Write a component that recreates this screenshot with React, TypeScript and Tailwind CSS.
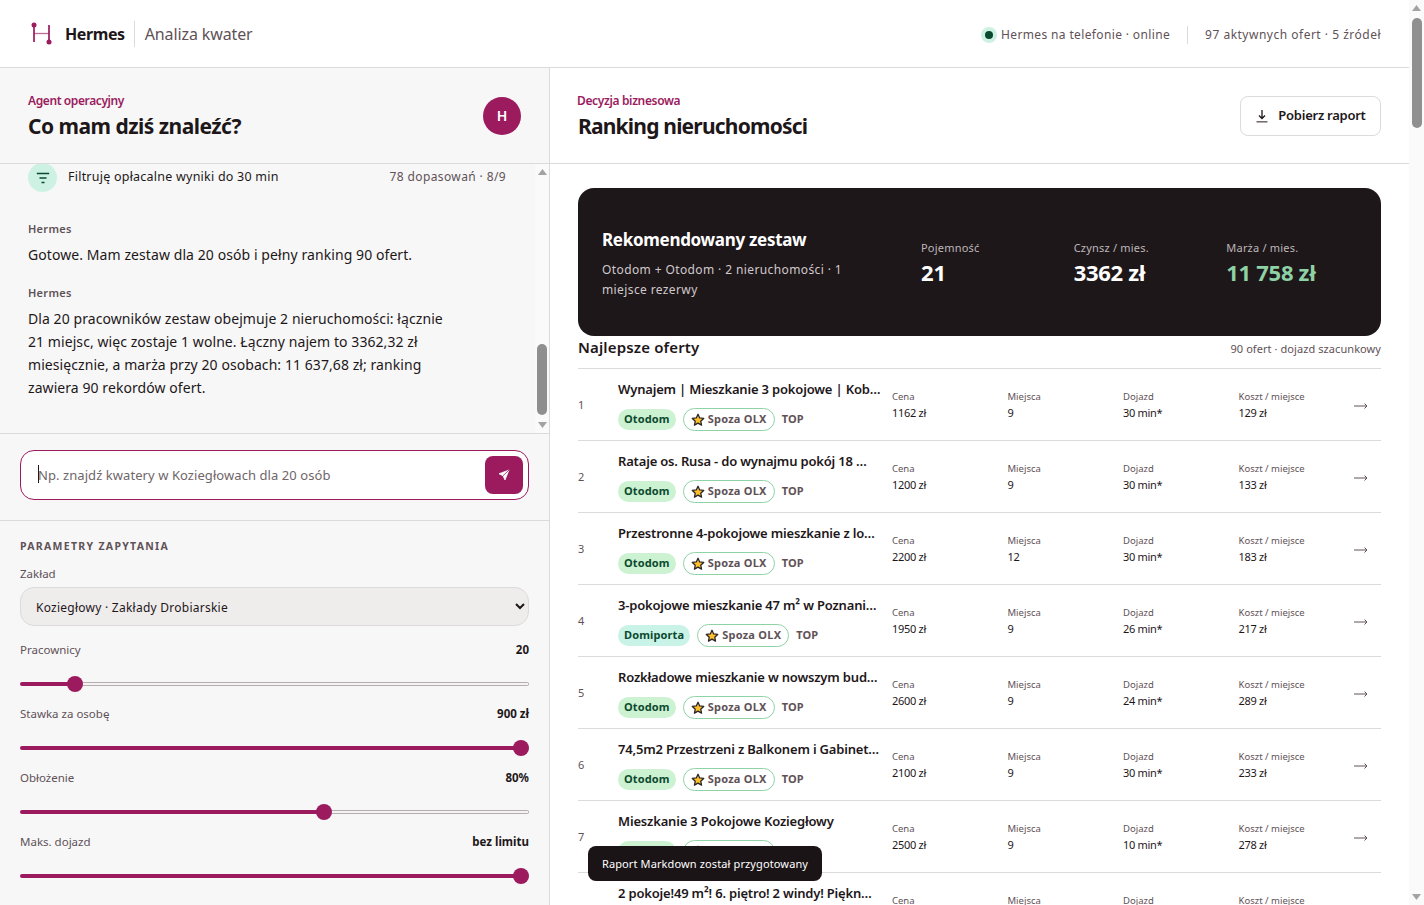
import React, { useLayoutEffect, useRef } from "react";

const rows = [
  { t: "Wynajem | Mieszkanie 3 pokojowe | Kob…", s: "Otodom", c: "1162 zł", m: "9", d: "30 min*", k: "129 zł" },
  { t: "Rataje os. Rusa - do wynajmu pokój 18 …", s: "Otodom", c: "1200 zł", m: "9", d: "30 min*", k: "133 zł" },
  { t: "Przestronne 4-pokojowe mieszkanie z lo…", s: "Otodom", c: "2200 zł", m: "12", d: "30 min*", k: "183 zł" },
  { t: "3-pokojowe mieszkanie 47 m² w Poznani…", s: "Domiporta", c: "1950 zł", m: "9", d: "26 min*", k: "217 zł" },
  { t: "Rozkładowe mieszkanie w nowszym bud…", s: "Otodom", c: "2600 zł", m: "9", d: "24 min*", k: "289 zł" },
  { t: "74,5m2 Przestrzeni z Balkonem i Gabinet…", s: "Otodom", c: "2100 zł", m: "9", d: "30 min*", k: "233 zł" },
  { t: "Mieszkanie 3 Pokojowe Koziegłowy", s: "Otodom", c: "2500 zł", m: "9", d: "10 min*", k: "278 zł" },
  { t: "2 pokoje!49 m²! 6. piętro! 2 windy! Piękn…", s: "Otodom", c: "2400 zł", m: "9", d: "30 min*", k: "267 zł" },
];

function Logo() {
  return (
    <svg width="22" height="26" viewBox="0 0 22 26" fill="none" className="shrink-0">
      <path d="M3 4V21M18 4V21" stroke="#9b1b5e" strokeWidth="1.7" />
      <path d="M3 12.5H18" stroke="#9b1b5e" strokeOpacity="0.65" strokeWidth="1.3" />
      <circle cx="3" cy="4" r="2.5" fill="#9b1b5e" />
      <circle cx="18" cy="21" r="2.5" fill="#9b1b5e" />
    </svg>
  );
}

function Star() {
  return (
    <svg width="14" height="14" viewBox="0 0 24 24" className="shrink-0">
      <path d="M12 2.2l2.9 6.3 6.9.8-5.1 4.7 1.4 6.8L12 17.3l-6.1 3.5 1.4-6.8L2.2 9.3l6.9-.8z" fill="#fbc02d" stroke="#2b2326" strokeWidth="2.2" strokeLinejoin="round" />
    </svg>
  );
}

function Bar({ before, thumb, className }: { before: number; thumb: number; className: string }) {
  return (
    <div className={`flex shrink-0 flex-col items-center bg-[#fafafa] ${className}`}>
      <svg width="9" height="6" viewBox="0 0 9 6" className="mt-[5px] shrink-0">
        <path d="M4.5 0L9 6H0z" fill="#a3a3a3" />
      </svg>
      <div className="w-[10px] shrink-0 rounded-full bg-[#8f8f8f]" style={{ marginTop: before, height: thumb }} />
      <svg width="9" height="6" viewBox="0 0 9 6" className="mt-auto mb-[5px] shrink-0">
        <path d="M4.5 6L9 0H0z" fill="#a3a3a3" />
      </svg>
    </div>
  );
}

function Metric({ label, value }: { label: string; value: string }) {
  return (
    <div className="flex flex-col pt-[2px]">
      <span className="text-[9.5px] leading-[14px] text-[#5f5257]">{label}</span>
      <span className="text-[11px] leading-[18px] tracking-[-0.3px] text-[#1e171a]">{value}</span>
    </div>
  );
}

function Row({ r, i }: { r: (typeof rows)[number]; i: number }) {
  return (
    <div className="grid h-[72px] grid-cols-[28px_262px_repeat(4,103.5px)_27px] items-center gap-x-3 border-b border-[#dcdadb]">
      <span className="pt-[2px] text-[11px] text-[#5f5257]">{i + 1}</span>
      <div className="flex min-w-0 flex-col gap-[10px] pt-[2px]">
        <div className="text-[13px] leading-[18px] font-semibold tracking-[-0.18px] whitespace-nowrap text-[#1e171a]">{r.t}</div>
        <div className="flex items-center gap-[7px] text-[11px] font-bold tracking-[0.12px]">
          <span className={`flex h-[21px] items-center rounded-full px-[6px] text-[#0b4a2e] ${r.s === "Domiporta" ? "bg-[#c9f3e7]" : "bg-[#ccf2d2]"}`}>{r.s}</span>
          <span className="flex h-[23px] items-center gap-[3px] rounded-full border border-[#8fd3a5] bg-white px-[7px] tracking-[0.25px] text-[#5f5257]">
            <Star />
            Spoza OLX
          </span>
          <span className="text-[#5f5257]">TOP</span>
        </div>
      </div>
      <Metric label="Cena" value={r.c} />
      <Metric label="Miejsca" value={r.m} />
      <Metric label="Dojazd" value={r.d} />
      <Metric label="Koszt / miejsce" value={r.k} />
      <svg width="14" height="8" viewBox="0 0 14 8" fill="none" stroke="#5f5257" strokeWidth="1" className="mt-[2px]">
        <path d="M0 4H13M10.5 1.5L13 4L10.5 6.5" />
      </svg>
    </div>
  );
}

function Slider({ label, value, min, max, cur }: { label: string; value: string; min: number; max: number; cur: number }) {
  const f = (cur - min) / (max - min);
  return (
    <div className="flex h-[64px] flex-col">
      <div className="flex h-[24px] shrink-0 items-center justify-between text-[11.5px]">
        <span className="text-[#5f5257]">{label}</span>
        <span className="font-bold text-[#1e171a]">{value}</span>
      </div>
      <input
        type="range"
        min={min}
        max={max}
        defaultValue={cur}
        style={{ "--p": `calc(8px + (100% - 16px) * ${f})` } as React.CSSProperties}
        className="mt-[14px] h-[16px] w-full shrink-0 appearance-none bg-transparent [&::-webkit-slider-runnable-track]:h-[4px] [&::-webkit-slider-runnable-track]:rounded-full [&::-webkit-slider-runnable-track]:[background:linear-gradient(to_right,transparent_var(--p),#f4f2f2_var(--p))_center/calc(100%-2px)_2px_no-repeat,linear-gradient(to_right,#9b1b5e_var(--p),#b5aeb1_var(--p))] [&::-webkit-slider-thumb]:mt-[-6px] [&::-webkit-slider-thumb]:h-[16px] [&::-webkit-slider-thumb]:w-[16px] [&::-webkit-slider-thumb]:appearance-none [&::-webkit-slider-thumb]:rounded-full [&::-webkit-slider-thumb]:bg-[#9b1b5e]"
      />
    </div>
  );
}

export default function App() {
  const chat = useRef<HTMLDivElement>(null);
  useLayoutEffect(() => {
    if (chat.current) chat.current.scrollTop = chat.current.scrollHeight;
  }, []);
  return (
    <div className="flex h-screen overflow-hidden bg-white text-[#1e171a] [font-family:'Noto_Sans',sans-serif]">
      <div className="flex min-w-0 flex-1 flex-col">
        <header className="flex h-[68px] shrink-0 items-center justify-between border-b border-[#dcdadb] bg-white pr-[28px] pl-[31px]">
          <div className="flex items-center">
            <Logo />
            <span className="ml-[12px] text-[16px] font-bold tracking-[-0.4px]">Hermes</span>
            <span className="mr-[10px] ml-[9px] h-[26px] w-px bg-[#dcdadb]" />
            <span className="text-[16px] tracking-[-0.12px] text-[#5f5257]">Analiza kwater</span>
          </div>
          <div className="flex items-center pt-[2px] text-[12px] text-[#5f5257]">
            <span className="mr-[4px] flex h-[16px] w-[16px] items-center justify-center rounded-full bg-[#cdf2e4]">
              <span className="h-[8px] w-[8px] rounded-full bg-[#0b4a2e]" />
            </span>
            <span className="tracking-[0.36px]">Hermes na telefonie · online</span>
            <span className="mx-[17px] h-[18px] w-px bg-[#dcdadb]" />
            <span className="tracking-[0.5px]">97 aktywnych ofert · 5 źródeł</span>
          </div>
        </header>

        <div className="grid min-h-0 flex-1 grid-cols-[550px_1fr]">
          <aside className="flex h-full flex-col overflow-hidden border-r border-[#dcdadb] bg-[#f7f7f7]">
            <div className="flex h-[96px] shrink-0 items-center justify-between border-b border-[#dcdadb] px-[28px]">
              <div>
                <div className="text-[12px] leading-[21px] font-semibold tracking-[-0.4px] text-[#9b1b5e]">Agent operacyjny</div>
                <div className="text-[21px] leading-[30px] font-bold tracking-[-0.52px]">Co mam dziś znaleźć?</div>
              </div>
              <div className="flex h-[38px] w-[38px] items-center justify-center rounded-full bg-[#9b1b5e] text-[14px] font-semibold text-white">H</div>
            </div>

            <div className="flex h-[270px] shrink-0 border-b border-[#dcdadb]">
              <div ref={chat} className="min-w-0 flex-1 overflow-hidden">
                <div className="h-[663px]" />
                <div className="flex items-center justify-between pr-[29px] pl-[28px]">
                  <div className="flex items-center gap-[11px]">
                    <span className="flex h-[29px] w-[29px] items-center justify-center rounded-full bg-[#cdf2e4]">
                      <svg width="14" height="14" viewBox="0 0 14 14" fill="none" stroke="#0b4a2e" strokeWidth="1.3">
                        <path d="M0.8 2.5H13.2M3.5 7H10.5M5.5 11.5H8.5" />
                      </svg>
                    </span>
                    <span className="text-[12.5px] tracking-[0.23px]">Filtruję opłacalne wyniki do 30 min</span>
                  </div>
                  <span className="pb-[2px] text-[12px] tracking-[0.38px] text-[#5f5257]">78 dopasowań · 8/9</span>
                </div>
                <div className="mt-[29px] pl-[28px]">
                  <div className="text-[11px] leading-[16px] font-semibold tracking-[0.3px] text-[#5f5257]">Hermes</div>
                  <p className="mt-[6px] max-w-[420px] text-[14px] leading-[23px] tracking-[0.08px]">Gotowe. Mam zestaw dla 20 osób i pełny ranking 90 ofert.</p>
                </div>
                <div className="mt-[19px] pb-[34px] pl-[28px]">
                  <div className="text-[11px] leading-[16px] font-semibold tracking-[0.3px] text-[#5f5257]">Hermes</div>
                  <p className="mt-[6px] max-w-[420px] text-[14px] leading-[23px] tracking-[0.07px]">Dla 20 pracowników zestaw obejmuje 2 nieruchomości: łącznie 21 miejsc, więc zostaje 1 wolne. Łączny najem to 3362,32 zł miesięcznie, a marża przy 20 osobach: 11 637,68 zł; ranking zawiera 90 rekordów ofert.</p>
                </div>
              </div>
              <Bar before={169} thumb={71} className="w-[14px]" />
            </div>

            <div className="shrink-0 border-b border-[#dcdadb] px-[20px] pt-[16px] pb-[20px]">
              <div className="relative flex h-[50px] items-center rounded-[14px] border border-[#9b1b5e] bg-white pr-[5px] pl-[17px]">
                <input placeholder="Np. znajdź kwatery w Koziegłowach dla 20 osób" className="min-w-0 flex-1 bg-transparent pt-[1px] text-[13px] tracking-[0.07px] outline-none placeholder:text-[#6f666a]" />
                <span className="absolute top-[14px] left-[17px] h-[18px] w-px bg-[#1e171a]" />
                <button className="flex h-[38px] w-[38px] items-center justify-center rounded-[8px] bg-[#9b1b5e]">
                  <svg width="12" height="12" viewBox="0 0 24 24" fill="white" stroke="white" strokeWidth="1.5" strokeLinejoin="round">
                    <path d="M22 2L2 9.5l8 4L14 22z" />
                    <path d="M22 2L10 13.5" stroke="#9b1b5e" strokeWidth="1.6" />
                  </svg>
                </button>
              </div>
            </div>

            <div className="min-h-0 flex-1 px-[20px] pt-[18px]">
              <div className="text-[10.5px] leading-[14px] font-bold tracking-[1.3px] text-[#5f5257]">PARAMETRY ZAPYTANIA</div>
              <div className="mt-[13px] text-[11.5px] leading-[16px] text-[#5f5257]">Zakład</div>
              <select className="mt-[5px] h-[39px] w-full rounded-[14px] border border-[#dcdadb] bg-[#efecec] px-[11px] pt-[1px] text-[12px] tracking-[0.25px] outline-none">
                <option>Koziegłowy · Zakłady Drobiarskie</option>
              </select>
              <div className="mt-[12px]">
                <Slider label="Pracownicy" value="20" min={1} max={200} cur={20} />
                <Slider label="Stawka za osobę" value="900 zł" min={0} max={900} cur={900} />
                <Slider label="Obłożenie" value="80%" min={50} max={100} cur={80} />
                <Slider label="Maks. dojazd" value="bez limitu" min={0} max={100} cur={100} />
              </div>
            </div>
          </aside>

          <main className="min-w-0 overflow-hidden">
            <div className="flex h-[96px] items-center justify-between border-b border-[#dcdadb] px-[28px]">
              <div>
                <div className="-ml-px text-[12px] leading-[21px] font-semibold tracking-[-0.35px] text-[#9b1b5e]">Decyzja biznesowa</div>
                <div className="text-[21px] leading-[30px] font-bold tracking-[-0.8px]">Ranking nieruchomości</div>
              </div>
              <button className="flex h-[40px] w-[141px] items-center justify-center gap-[9px] rounded-[8px] border border-[#dcdadb] bg-white text-[13px] font-semibold tracking-[-0.25px]">
                <svg width="14" height="14" viewBox="0 0 14 14" fill="none" strokeWidth="1.3">
                  <path d="M7 1V9.5M4 6.5L7 9.5L10 6.5" stroke="#1e171a" />
                  <path d="M1.5 12.8H12.5" stroke="#6f666a" strokeWidth="1.5" />
                </svg>
                Pobierz raport
              </button>
            </div>

            <div className="px-[28px] pt-[24px]">
              <section className="grid h-[148px] grid-cols-[297px_1fr_1fr_1fr] items-center gap-x-[22px] rounded-[16px] bg-[#1e171a] px-[24px] text-white">
                <div className="max-w-[260px] pt-[3px]">
                  <div className="text-[17px] leading-[24px] font-bold tracking-[-0.3px]">Rekomendowany zestaw</div>
                  <div className="mt-[8px] text-[12px] leading-[20px] tracking-[0.39px] text-[#cfc9cb]">Otodom + Otodom · 2 nieruchomości · 1 miejsce rezerwy</div>
                </div>
                <div className="pt-[2px]">
                  <div className="text-[11px] leading-[16px] tracking-[0.2px] text-[#bdb6b9]">Pojemność</div>
                  <div className="mt-[1px] text-[22px] leading-[30px] font-bold">21</div>
                </div>
                <div className="pt-[2px]">
                  <div className="text-[11px] leading-[16px] tracking-[0.2px] text-[#bdb6b9]">Czynsz / mies.</div>
                  <div className="mt-[1px] text-[22px] leading-[30px] font-bold tracking-[-0.3px]">3362 zł</div>
                </div>
                <div className="pt-[2px]">
                  <div className="text-[11px] leading-[16px] tracking-[0.2px] text-[#bdb6b9]">Marża / mies.</div>
                  <div className="mt-[1px] text-[22px] leading-[30px] font-bold tracking-[-0.3px] text-[#8ed1a5]">11 758 zł</div>
                </div>
              </section>

              <div className="flex h-[33px] items-start justify-between border-b border-[#dcdadb]">
                <span className="text-[15px] leading-[22px] font-semibold tracking-[0.15px]">Najlepsze oferty</span>
                <span className="text-[11px] leading-[26px] tracking-[0.07px] text-[#5f5257]">90 ofert · dojazd szacunkowy</span>
              </div>
              {rows.map((r, i) => (
                <Row key={i} r={r} i={i} />
              ))}
            </div>
          </main>
        </div>
      </div>

      <Bar before={7} thumb={110} className="h-full w-[15px]" />

      <div className="fixed bottom-[24px] left-[588px] flex h-[35px] w-[234px] items-center justify-center rounded-[8px] bg-[#1b1416] pt-[1px] text-[11px] tracking-[0.12px] text-white">
        Raport Markdown został przygotowany
      </div>
    </div>
  );
}
